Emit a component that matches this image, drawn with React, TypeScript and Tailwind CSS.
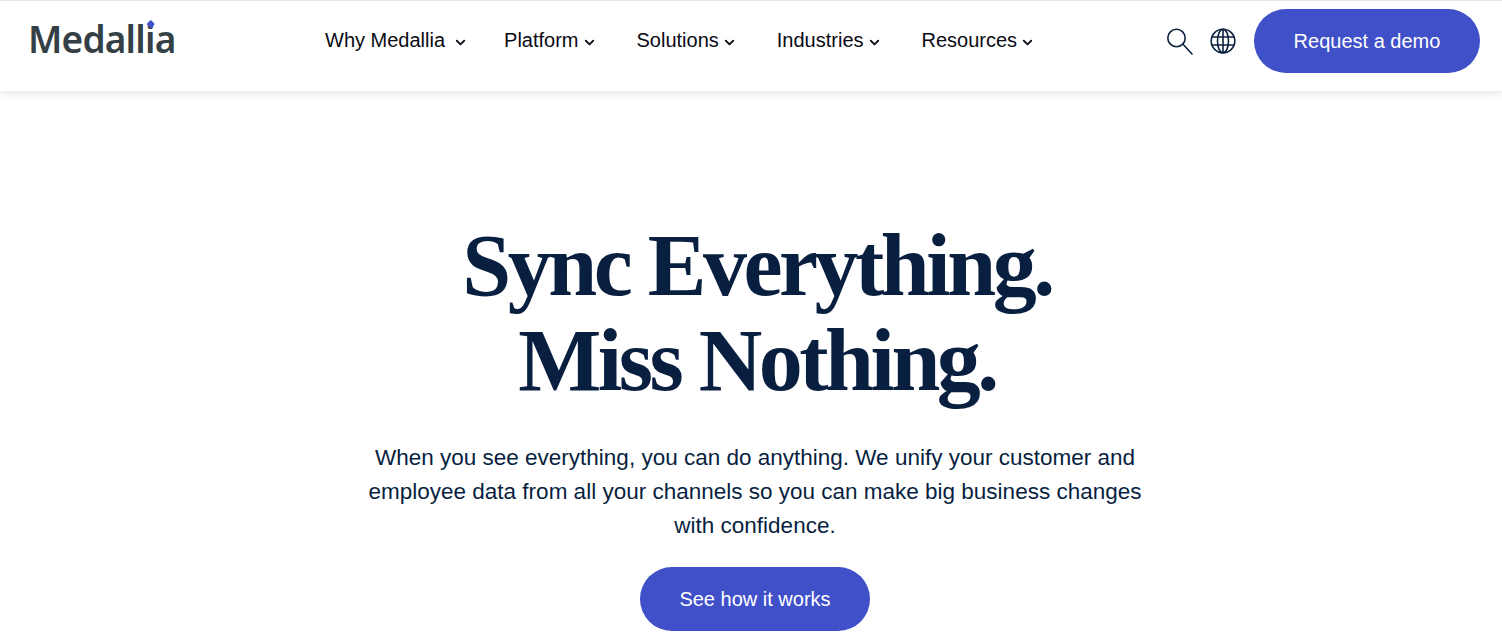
import React from 'react';
import { ChevronDown } from 'lucide-react';

const navItems = [
  { label: 'Why Medallia', gap: 'ml-[8px]', extra: 'mr-[-4px]' },
  { label: 'Platform', gap: 'ml-[3px]', extra: '' },
  { label: 'Solutions', gap: 'ml-[3px]', extra: '' },
  { label: 'Industries', gap: 'ml-[3px]', extra: '' },
  { label: 'Resources', gap: 'ml-[3px]', extra: '' },
];

const App: React.FC = () => {
  return (
    <div className="h-[643px] overflow-hidden bg-white font-['Liberation_Sans',Arial,sans-serif]">
      {/* HEADER */}
      <header className="flex h-[91px] items-center border-t border-[#e8e8e8] bg-white pb-[10px] shadow-[0_3px_8px_rgba(0,0,0,0.1)]">
        <div className="relative ml-[28px] mb-[3px] w-[297px]">
          <span className="relative font-['Noto_Sans',sans-serif] text-[37px] leading-none font-semibold tracking-[-0.8px] text-[#343f46]">
            Medallia
            {/* the logo's i carries a blue diamond instead of a dot */}
            <span className="absolute top-[-2px] left-[118px] h-[13px] w-[8px] bg-white" />
            <span className="absolute top-[8px] left-[120px] h-[5.5px] w-[5.5px] rotate-45 rounded-[1px] bg-[#4050c8]" />
          </span>
        </div>

        <nav className="mb-[2px] flex gap-[40px] text-[20px] text-[#0a0a14]">
          {navItems.map((item) => (
            <div key={item.label} className={`flex items-center ${item.extra}`}>
              <span>{item.label}</span>
              <ChevronDown className={`${item.gap} mt-[4px] h-[15px] w-[15px]`} strokeWidth={3} />
            </div>
          ))}
        </nav>

        <div className="ml-auto mr-[22px] flex items-center">
          <svg width="28" height="28" viewBox="0 0 28 28" fill="none" stroke="#0b213f" strokeWidth="1.6" strokeLinecap="round">
            <circle cx="10.5" cy="11" r="8.7" />
            <path d="M17 17.2 L26 27" />
          </svg>
          <svg className="ml-[16px]" width="26" height="26" viewBox="0 0 26 26" fill="none" stroke="#0b213f" strokeWidth="1.6">
            <circle cx="13" cy="13" r="11.8" />
            <ellipse cx="13" cy="13" rx="5.5" ry="11.8" />
            <path d="M13 1.2 V24.8 M1.8 9 H24.2 M1.8 17 H24.2" />
          </svg>
          <button className="ml-[18px] h-[64px] w-[226px] rounded-[32px] bg-[#4050c8] text-[20px] text-white">
            Request a demo
          </button>
        </div>
      </header>

      {/* HERO */}
      <main className="flex flex-col items-center pt-[127px] pl-[8px] text-[#081f3f]">
        <h1 className="ml-[4px] text-center font-['Liberation_Serif',serif] text-[88px] leading-[95px] font-bold tracking-[-3.5px]">
          Sync Everything.
          <br />
          Miss Nothing.
        </h1>
        <p className="mt-[33px] w-[800px] text-center text-[22.5px] leading-[34px]">
          When you see everything, you can do anything. We unify your customer and
          <br />
          employee data from all your channels so you can make big business changes
          <br />
          with confidence.
        </p>
        <button className="mt-[24px] h-[64px] w-[230px] rounded-[32px] bg-[#4050c8] text-[20px] text-white">
          See how it works
        </button>
      </main>
    </div>
  );
};

export default App;
